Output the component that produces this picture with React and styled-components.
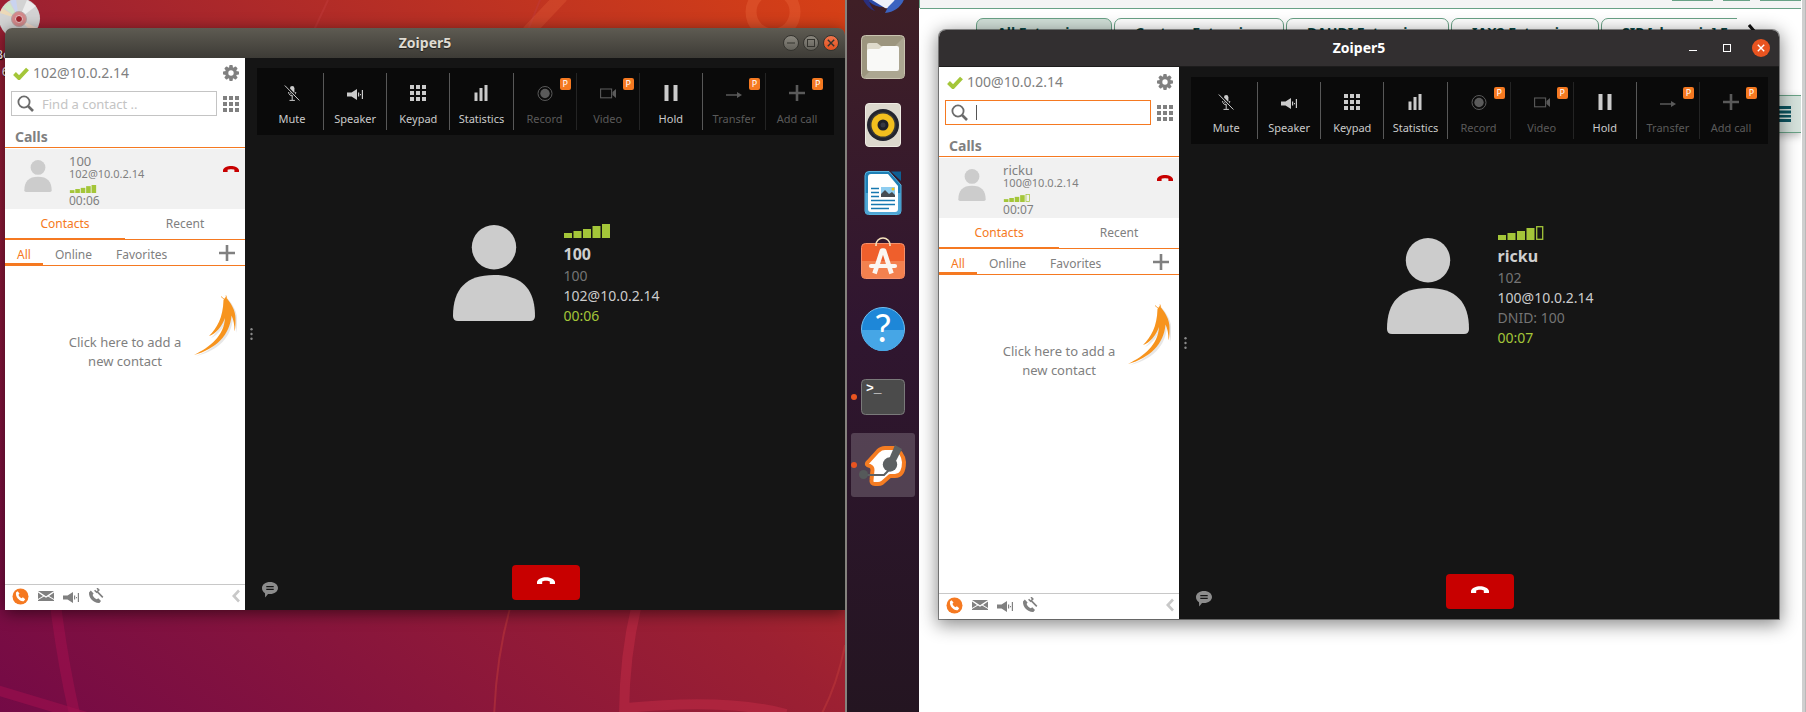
import React from "react";
import styled, { createGlobalStyle, css } from "styled-components";

const ORANGE = "#f57921";
const GREY = "#808080";
const LIME = "#a4c639";

const GlobalStyle = createGlobalStyle`
  *, *::before, *::after { box-sizing: border-box; }
  body {
    margin: 0;
    font-family: "Noto Sans", "Open Sans", sans-serif;
    color: ${GREY};
    overflow-x: hidden;
  }
  button, input { font: inherit; color: inherit; }
  button { border: 0; padding: 0; background: none; cursor: pointer; }
  h1, h2, p, ul { margin: 0; padding: 0; }
  svg { display: block; flex: none; }
`;

/* ---------- page ---------- */

const Page = styled.div`
  display: flex;
  min-height: 100vh;
  overflow: hidden;
`;

const FirstDesktop = styled.section`
  flex: 846 1 0;
  min-width: 0;
  display: grid;
  overflow: hidden;
  border-right: 2px solid #85827d;
  background: linear-gradient(to top right, #740a46, #9c2032 50%, #d64016);
`;

const SecondDesktop = styled.section`
  flex: 960 1 0;
  min-width: 0;
  display: flex;
`;

const Layer = styled.div`
  grid-area: 1 / 1;
  min-width: 0;
  min-height: 0;
`;

const WindowArea = styled(Layer)`
  position: relative;
  display: flex;
  padding: ${(p) => (p.$variant === "classic" ? "28px 0 102px 5px" : "30px 27px 93px 20px")};
`;

const DesktopIcon = styled(Layer)`
  width: 88px;
  margin-left: -24px;
  display: flex;
  flex-direction: column;
  align-items: center;
  color: #fff;
  font-size: 13px;
  line-height: 17px;
  text-align: center;
  text-shadow: 1px 1px 1px #000;
`;

const DiscLabel = styled.span`
  margin-top: 4px;
`;

const WallpaperArt = styled.svg`
  grid-area: 1 / 1;
  width: 100%;
  height: 100%;
`;

/* ---------- dock ---------- */

const Dock = styled.nav`
  flex: none;
  width: 72px;
  padding: 0 4px;
  overflow: hidden;
  background: linear-gradient(#3f1f26, #301630 45%, #241521);
`;

const DockList = styled.ul`
  list-style: none;
  display: flex;
  flex-direction: column;
  gap: 4px;
  margin-top: -43px;
`;

const DockButton = styled.button`
  display: block;
  width: 64px;
  height: 64px;
  border-radius: 3px;
  background: ${(p) => (p.$active ? "rgba(255, 255, 255, 0.19)" : "none")};
`;

/* ---------- browser page ---------- */

const BrowserScreen = styled.div`
  flex: 1;
  min-width: 0;
  display: grid;
  grid-template-columns: minmax(0, 1fr);
`;

const BrowserPage = styled(Layer)`
  display: flex;
  overflow: hidden;
  background: #fff;
`;

const BrowserContent = styled.div`
  flex: 1;
  min-width: 0;
  border-left: 1px solid #69a286;
  border-image: linear-gradient(#69a286 0 9px, #fff 9px) 1;
`;

const BrowserBar = styled.div`
  height: 9px;
  display: flex;
  justify-content: flex-end;
  align-items: flex-start;
  gap: 10px;
  background: #f4f4f4;
  border-bottom: 1px solid #69a286;
`;

const BarStub = styled.span`
  width: ${(p) => p.$width}px;
  height: 1px;
  background: #69a286;
`;

const TabRow = styled.div`
  display: flex;
  margin: 9px 11px 0 56px;
`;

const TabClip = styled.div`
  flex: 1;
  min-width: 0;
  display: flex;
  gap: 2px;
  overflow: hidden;
`;

const PageTab = styled.button`
  flex: none;
  width: ${(p) => p.$width}px;
  height: 40px;
  display: flex;
  align-items: flex-start;
  padding: 4px 16px 0 20px;
  border: 1px solid #69a286;
  border-radius: 7px 7px 0 0;
  background: ${(p) => (p.$active ? "#d2e0d9" : "#fff")};
  color: #0b4a47;
  font-size: 14px;
  font-weight: 700;
  line-height: 20px;
  text-align: left;
  white-space: nowrap;
  overflow: hidden;
`;

const TabScroll = styled.button`
  align-self: flex-start;
  width: 53px;
  padding: 6px 0 0 11px;
`;

const MenuStrip = styled.div`
  display: flex;
  justify-content: flex-end;
  margin: 37px 0 0 770px;
  padding: 10px;
  border: 1px solid #69a286;
  border-right: 0;
  background: #d5e2dc;
  box-shadow: 0 3px 8px rgba(0, 0, 0, 0.25);
`;

const Scrollbar = styled.div`
  width: 5px;
  border: solid #fff;
  border-width: 0 1px;
  border-right-color: #b9b9b9;
  background: #cfcfcf;
`;

/* ---------- phone window ---------- */

const WindowFrame = styled.article`
  flex: 1;
  min-width: 0;
  display: flex;
  flex-direction: column;
  border-radius: 7px 7px 0 0;
  ${(p) =>
    p.$variant === "classic"
      ? css`
          box-shadow: 0 3px 16px rgba(0, 0, 0, 0.55);
        `
      : css`
          box-shadow: 0 0 0 1px rgba(0, 0, 0, 0.4), 0 4px 18px 2px rgba(0, 0, 0, 0.45);
        `}
`;

const TitleBar = styled.header`
  display: grid;
  grid-template-columns: 1fr auto 1fr;
  align-items: center;
  border-radius: 7px 7px 0 0;
  ${(p) =>
    p.$variant === "classic"
      ? css`
          height: 30px;
          padding: 0 6px;
          color: #dfdbd2;
          background: linear-gradient(#5e5b52, #3d3b36);
          text-shadow: 0 1px 1px #1d1c1a;
        `
      : css`
          height: 37px;
          padding: 0 9px;
          color: #fff;
          background: #322f30;
          border-bottom: 1px solid #1d1c1c;
        `}
`;

const WindowTitle = styled.h1`
  grid-column: 2;
  font-size: 14px;
  line-height: 20px;
  font-weight: 700;
`;

const WindowButtons = styled.div`
  display: flex;
  justify-content: flex-end;
  gap: ${(p) => (p.$variant === "classic" ? 4 : 16)}px;
`;

const WindowButton = styled.button`
  display: grid;
  place-items: center;
  border-radius: 50%;
  ${(p) =>
    p.$variant === "classic"
      ? css`
          width: 16px;
          height: 16px;
          color: #35342f;
          border: 1px solid #35342f;
          background: ${p.$close ? "linear-gradient(#f0754c, #e2521f)" : "linear-gradient(#8a877e, #63615a)"};
        `
      : css`
          width: 18px;
          height: 18px;
          color: #fff;
          background: ${p.$close ? "#e95420" : "none"};
        `}
`;

const WindowBody = styled.div`
  flex: 1;
  display: flex;
  min-height: 480px;
`;

/* ---------- sidebar ---------- */

const Sidebar = styled.aside`
  flex: none;
  width: 240px;
  display: flex;
  flex-direction: column;
  background: #fff;
`;

const AccountRow = styled.div`
  display: flex;
  align-items: center;
  height: 30px;
  padding: 0 6px 0 8px;
  gap: 4px;
  font-size: 14px;
  line-height: 20px;
`;

const AccountName = styled.span`
  flex: 1;
`;

const SearchRow = styled.div`
  display: flex;
  align-items: center;
  gap: 6px;
  padding: 3px 6px 0;
`;

const SearchBox = styled.label`
  flex: 1;
  min-width: 0;
  height: 25px;
  display: flex;
  align-items: center;
  padding: 0 5px;
  border: 1px solid ${(p) => (p.$focused ? ORANGE : "#c4c4c4")};
  color: #6b6b6b;
`;

const SearchInput = styled.input`
  flex: 1;
  min-width: 0;
  margin-left: 8px;
  padding: 0;
  border: 0;
  outline: 0;
  background: none;
  font-size: 13px;
  line-height: 20px;
  &::placeholder { color: #c4c4c4; opacity: 1; }
`;

const Caret = styled.span`
  width: 1px;
  height: 15px;
  margin-left: 8px;
  background: #555;
`;

const SectionTitle = styled.h2`
  height: 32px;
  padding: 11px 10px 0;
  border-bottom: 1px solid ${ORANGE};
  font-size: 14px;
  line-height: 20px;
  font-weight: 700;
`;

const CallItem = styled.div`
  display: flex;
  align-items: flex-start;
  height: 60px;
  margin-top: 1px;
  padding: 6px 6px 0 19px;
  background: #f1f1f1;
`;

const CallText = styled.div`
  flex: 1;
  padding-left: 17px;
  font-size: 12px;
  line-height: 16px;
`;

const CallName = styled.p`
  font-size: 13px;
  line-height: 13px;
`;

const CallAccount = styled.p`
  font-size: 11px;
  line-height: 12px;
  margin-bottom: 5px;
`;

const AvatarSlot = styled.div`
  padding-top: 5px;
`;

const HangUp = styled.button`
  padding: 11px 0;
  color: #c80000;
`;

const Tabs = styled.div`
  display: flex;
  height: 31px;
  box-shadow: inset 0 -1px 0 ${ORANGE};
`;

const Tab = styled.button`
  flex: 1;
  padding-bottom: 1px;
  font-size: 12px;
  color: ${(p) => (p.$active ? ORANGE : GREY)};
  border-bottom: 2px solid ${(p) => (p.$active ? ORANGE : "transparent")};
`;

const Filters = styled.div`
  display: flex;
  height: 26px;
  padding-right: 10px;
  box-shadow: inset 0 -1px 0 ${ORANGE};
`;

const Filter = styled.button`
  padding: 6px 12px 0;
  font-size: 12px;
  line-height: 16px;
  color: ${(p) => (p.$active ? ORANGE : GREY)};
  border-bottom: 3px solid ${(p) => (p.$active ? ORANGE : "transparent")};
`;

const AddButton = styled.button`
  margin-left: auto;
`;

const EmptyContacts = styled.div`
  position: relative;
  flex: 1;
  padding: 67px 40px 0;
  text-align: center;
  font-size: 13px;
  line-height: 19px;
`;

const ArrowHint = styled.div`
  position: absolute;
  top: 29px;
  right: 7px;
`;

const SidebarFooter = styled.footer`
  display: flex;
  align-items: center;
  height: 26px;
  padding: 0 5px 3px 7px;
  gap: 9px;
  border-top: 1px solid #c8c8c8;
`;

const CollapseButton = styled.button`
  margin-left: auto;
`;

/* ---------- call panel ---------- */

const CallPanel = styled.main`
  flex: 1;
  min-width: 0;
  display: flex;
  padding-right: 11px;
  background: #151515;
`;

const Grip = styled.div`
  width: 12px;
  display: grid;
  place-items: center;
  color: #8a8a8a;
`;

const CallContent = styled.div`
  flex: 1;
  min-width: 0;
  display: flex;
  flex-direction: column;
`;

const Toolbar = styled.div`
  display: flex;
  margin-top: 10px;
  padding: 5px 6px 5px 4px;
  background: #0a0a0a;
`;

const ToolButton = styled.button`
  position: relative;
  flex: 1 1 0;
  min-width: 0;
  height: 57px;
  display: flex;
  flex-direction: column;
  align-items: center;
  padding-top: 12px;
  gap: 10px;
  font-size: 11px;
  line-height: 16px;
  white-space: nowrap;
  color: ${(p) => (p.$locked ? "#5a5a5a" : "#cbcbcb")};
  & + & { border-left: 1px solid #585858; }
  ${(p) =>
    p.$dimEdge &&
    css`
      &&& { border-left-color: #242424; }
    `}
`;

const Badge = styled.span`
  position: absolute;
  top: 5px;
  right: 5px;
  width: 11px;
  height: 12px;
  border-radius: 2px;
  background: ${ORANGE};
  color: #fff;
  font-size: 9px;
  line-height: 12px;
  text-align: center;
`;

const CallInfo = styled.div`
  display: grid;
  grid-template-columns: minmax(0, 1fr) minmax(0, 1fr);
  align-items: center;
  min-height: 118px;
  margin-top: 79px;
`;

const AvatarColumn = styled.div`
  display: flex;
  justify-content: flex-end;
  padding-right: 11px;
`;

const InfoColumn = styled.div`
  padding: 3px 0 0 18px;
  font-size: 14px;
  line-height: 20px;
`;

const InfoLine = styled.p`
  color: ${(p) => (p.$tone === "time" ? LIME : p.$tone === "muted" ? "#747474" : "#cccccc")};
`;

const PeerName = styled.h2`
  margin-top: 5px;
  margin-bottom: 1px;
  color: #cfcfcf;
  font-size: 16px;
  line-height: 22px;
`;

const CallFooter = styled.div`
  margin-top: auto;
  display: grid;
  grid-template-columns: 1fr auto 1fr;
  align-items: end;
  padding: 0 5px 10px;
`;

const ChatButton = styled.button`
  justify-self: start;
  padding-bottom: 2px;
`;

const EndButton = styled.button`
  width: 68px;
  height: 35px;
  display: grid;
  place-items: center;
  padding-bottom: 4px;
  border-radius: 4px;
  background: #c80000;
  color: #fff;
`;

/* ---------- drawings ---------- */

const PersonIcon = ({ width, height }) => (
  <svg width={width} height={height} viewBox="0 0 82 96" fill="#cccccc" aria-hidden="true">
    <circle cx="41" cy="22.2" r="22.2" />
    <path d="M0 91C0 64 13 50 41 50s41 14 41 41q0 5-5 5H5q-5 0-5-5z" />
  </svg>
);

const SignalIcon = ({ level, width, height }) => (
  <svg width={width} height={height} viewBox="0 0 46 14" role="img" aria-label={`Signal ${level} of 5`}>
    {[5, 7, 9, 12, 14].map((h, i) =>
      i < level ? (
        <rect key={h} x={i * 9.5} y={14 - h} width="8" height={h} fill={LIME} />
      ) : (
        <rect key={h} x={i * 9.5 + 0.7} y={14 - h + 0.7} width="6" height={h - 1.4} fill="none" stroke={LIME} strokeWidth="1.3" />
      )
    )}
  </svg>
);

const HangUpIcon = ({ width, height }) => (
  <svg width={width} height={height} viewBox="0 0 16 6" fill="currentColor" aria-hidden="true">
    <path d="M0 6V4C1 1.4 4.4 0 8 0s7 1.4 8 4v2h-4.6V3.8C10 3 6 3 4.6 3.8V6z" />
  </svg>
);

const CheckIcon = () => (
  <svg width="16" height="14" viewBox="0 0 16 14" aria-hidden="true">
    <path d="M1.5 7.5 6 12 14.5 3" fill="none" stroke={LIME} strokeWidth="4" />
  </svg>
);

const GearIcon = () => (
  <svg width="16" height="16" viewBox="0 0 16 16" aria-hidden="true">
    <g fill={GREY}>
      {[0, 45, 90, 135].map((a) => (
        <rect key={a} x="6.2" y="0" width="3.6" height="16" rx="1" transform={`rotate(${a} 8 8)`} />
      ))}
      <circle cx="8" cy="8" r="6" />
    </g>
    <circle cx="8" cy="8" r="2.7" fill="#fff" />
  </svg>
);

const KeypadIcon = () => (
  <svg width="16" height="16" viewBox="0 0 16 16" fill="currentColor" aria-hidden="true">
    {[0, 6, 12].map((y) => [0, 6, 12].map((x) => <rect key={x + "-" + y} x={x} y={y} width="4" height="4" />))}
  </svg>
);

const SearchIcon = () => (
  <svg width="17" height="17" viewBox="0 0 17 17" fill="none" stroke="currentColor" aria-hidden="true">
    <circle cx="7" cy="7" r="5.6" strokeWidth="1.8" />
    <path d="M11 11l5 5" strokeWidth="2.6" />
  </svg>
);

const PlusIcon = () => (
  <svg width="16" height="16" viewBox="0 0 16 16" fill="none" stroke="currentColor" strokeWidth="2.6" aria-hidden="true">
    <path d="M8 0v16M0 8h16" />
  </svg>
);

const SpeakerIcon = () => (
  <svg width="16" height="16" viewBox="0 0 16 16" fill="currentColor" aria-hidden="true">
    <path d="M0 7.500h4.500L10 4v11l-5.500-3.500H0zM11 7.500h1.200v4H11zM13 9h1v1.200h-1zM14.800 5H16v9h-1.200z" />
  </svg>
);

const MuteIcon = () => (
  <svg width="16" height="16" viewBox="0 0 16 16" fill="none" stroke="currentColor" aria-hidden="true">
    <rect x="6" y="1" width="4.4" height="8.5" rx="2.2" fill="currentColor" stroke="none" />
    <path d="M4.6 7c0 5 7.2 5 7.2 0M8.2 11v4M5.5 15.4h5.4" strokeWidth="1" />
    <path d="M1.500.5l14 15" stroke="#0a0a0a" strokeWidth="2.6" />
    <path d="M.8.500l14.600 15" strokeWidth="1" />
  </svg>
);

const StatsIcon = () => (
  <svg width="16" height="16" viewBox="0 0 16 16" fill="currentColor" aria-hidden="true">
    <path d="M1.500 7.500h3V16h-3zM6.500 3h3v13h-3zM11.500 0h3v16h-3z" />
  </svg>
);

const RecordIcon = () => (
  <svg width="16" height="16" viewBox="0 0 16 16" aria-hidden="true">
    <circle cx="8" cy="8.500" r="7" fill="none" stroke="currentColor" strokeWidth="1" />
    <circle cx="8" cy="8.500" r="4.700" fill="currentColor" />
  </svg>
);

const VideoIcon = () => (
  <svg width="16" height="16" viewBox="0 0 16 16" aria-hidden="true">
    <rect x=".6" y="4" width="11" height="8.800" fill="none" stroke="currentColor" strokeWidth="1.100" />
    <path d="M12.500 7 16 4v9l-3.500-3z" fill="currentColor" />
  </svg>
);

const PauseIcon = () => (
  <svg width="16" height="16" viewBox="0 0 16 16" fill="currentColor" aria-hidden="true">
    <path d="M1.500 0h4v16h-4zM10.500 0h4v16h-4z" />
  </svg>
);

const TransferIcon = () => (
  <svg width="16" height="16" viewBox="0 0 16 16" aria-hidden="true">
    <path d="M0 9.200h11V7l5 3-5 3v-2.200H0z" fill="currentColor" />
  </svg>
);

const PhoneCircleIcon = () => (
  <svg width="17" height="17" viewBox="0 0 17 17" aria-hidden="true">
    <circle cx="8.500" cy="8.500" r="8" fill={ORANGE} />
    <path d="M4 4.600 5.600 3.300l1.900 2.300-1 1.200c.3 1.500 1.400 2.800 3 3.400l1.400-.9 2.300 2-1.500 1.900C8 14 3.200 9.400 4 4.600z" fill="#fff" />
  </svg>
);

const MailIcon = () => (
  <svg width="16" height="10" viewBox="0 0 16 10" fill={GREY} aria-hidden="true">
    <path d="M0 0h16L8 5.200zM0 1.600 5 5 0 8zM16 1.600 11 5l5 3zM0 10V9l6-3.400 2 1.200 2-1.200L16 9v1z" />
  </svg>
);

const RepairIcon = () => (
  <svg width="16" height="16" viewBox="0 0 16 16" aria-hidden="true">
    <path d="M1 4.500 2.800 2.600l2.800 3-1 1.500c.6 1.900 2.100 3.500 4.200 4.200l1.500-1L13 13l-1.600 2C5.800 15.400.6 10 1 4.500z" fill={GREY} />
    <path d="M6.600 2.200 8.600 4.200 10.800 2 9 .2M9.200 3.600 14.800 9.400" fill="none" stroke={GREY} strokeWidth="1.600" />
  </svg>
);

const ChevronIcon = () => (
  <svg width="8" height="14" viewBox="0 0 8 14" fill="none" stroke="#c8c8c8" strokeWidth="2.600" aria-hidden="true">
    <path d="M7 1.500 1.800 7 7 12.500" />
  </svg>
);

const ArrowIcon = () => (
  <svg width="44" height="66" viewBox="0 0 44 66" aria-hidden="true">
    <path
      d="M34 4C39 10 44 18 43 26c0 5 0 9-1 12 0-7-1-12-3-16-1 20-15 34-37 39 16-6 29-16 31-37-3 8-9 16-16 19 8-7 13-18 14-39z"
      fill="#888"
      opacity=".2"
    />
    <path
      d="M31.500 2c5 5 10.500 14 10 22 0 5 0 9-1 12.500 0-7-1-12-3-16C36 40 22 54 0 60c16-8 30-19 31-37-3 8-9 16-16 18 8-8 14-18 14.500-36z"
      fill="#f7941e"
    />
    <path d="M27 1.500l3.500 3M32 .5l.8 3" stroke="#f7941e" strokeWidth=".8" />
  </svg>
);

const ChatIcon = () => (
  <svg width="16" height="16" viewBox="0 0 16 16" aria-hidden="true">
    <path d="M8 0c4.500 0 8 2.600 8 6s-3.500 6-8 6c-.7 0-1.300 0-2 .1L3.200 15.600 3 11.200C1.200 10.200 0 8.300 0 6c0-3.400 3.500-6 8-6z" fill="#8c8c8c" />
    <path d="M4.300 4.700h7.400M4.300 7.300h7.400" stroke="#151515" strokeWidth="1.200" />
  </svg>
);

const DotsIcon = () => (
  <svg width="3" height="12" viewBox="0 0 3 12" fill="currentColor" aria-hidden="true">
    <circle cx="1.500" cy="1.300" r="1.200" />
    <circle cx="1.500" cy="6" r="1.200" />
    <circle cx="1.500" cy="10.700" r="1.200" />
  </svg>
);

const MinGlyph = ({ flat }) => (
  <svg width="10" height="10" viewBox="0 0 10 10" stroke="currentColor" aria-hidden="true">
    <path d={flat ? "M1 7.500h8" : "M1 5h8"} strokeWidth="1" />
  </svg>
);

const MaxGlyph = () => (
  <svg width="10" height="10" viewBox="0 0 10 10" fill="none" stroke="currentColor" aria-hidden="true">
    <rect x="1.500" y="1.500" width="7" height="7" />
  </svg>
);

const CloseGlyph = () => (
  <svg width="10" height="10" viewBox="0 0 10 10" stroke="currentColor" strokeWidth="1.400" aria-hidden="true">
    <path d="M1.800 1.800l6.400 6.400M8.200 1.800 1.800 8.200" />
  </svg>
);

const DiscIcon = () => (
  <svg width="42" height="42" viewBox="0 0 42 42" aria-hidden="true">
    <circle cx="20.500" cy="18.500" r="20.500" fill="#d3d3d3" />
    <path d="M20 19 4 7l6-5z" fill="#cfe6c8" />
    <path d="M20 19 1 13l2-5z" fill="#ecd9b8" />
    <path d="M20 19 11 1l6-2z" fill="#c9d3f0" />
    <path d="M20 19l18 9-4 5z" fill="#f1d8c8" />
    <path d="M20 19 28 0l9 6z" fill="#ececec" />
    <circle cx="20" cy="19" r="7.500" fill="#d48a8c" stroke="#b9a3a3" />
    <circle cx="20" cy="19" r="3.500" fill="#a3262e" stroke="#e7caca" />
  </svg>
);

const Wallpaper = () => (
  <WallpaperArt viewBox="0 0 845 712" preserveAspectRatio="none" fill="none" aria-hidden="true">
    <path d="M40 320C40 480 52 620 76 720" stroke="#a3104f" strokeWidth="11" opacity=".55" />
    <path d="M-10 688 90 718" stroke="#a3104f" strokeWidth="10" opacity=".55" />
    <path d="M636 608q-12 50-12 110M626 708q100-10 160 6" stroke="#c42c46" strokeWidth="10" opacity=".5" />
    <path d="M510 608q-14 50-16 110M845 645q-8 40-24 70M328 0l-14 30M540 0l-12 30" stroke="#c03a3a" strokeWidth="2" opacity=".5" />
    <path d="M562-4l-34 36" stroke="#e8643a" strokeWidth="13" opacity=".3" />
    <circle cx="773" cy="12" r="22" stroke="#e8643a" strokeWidth="11" opacity=".4" />
  </WallpaperArt>
);

const ThunderbirdIcon = () => (
  <svg width="64" height="64" viewBox="0 0 64 64" aria-hidden="true">
    <circle cx="32" cy="30" r="20" fill="#2b4aa8" />
    <path d="M10 38c3 8 8 14 14 16-4-4-6-8-6-12z" fill="#2a2f7d" />
    <path d="M16 40l18 11q4 1 6-2l8-12z" fill="#eef0f8" />
    <path d="M34 56c10-1 18-7 20-17l-4 3 1-6-14 14z" fill="#3b63c0" />
  </svg>
);

const FilesIcon = () => (
  <svg width="64" height="64" viewBox="0 0 64 64" aria-hidden="true">
    <rect x="10.500" y="10.500" width="43" height="43" rx="4" fill="#9c957e" stroke="#c9c3b0" />
    <path d="M53 12v38q0 3-3 3H12z" fill="#aca691" />
    <path d="M16 20q0-2 2-2h8l4 3h14v8H16z" fill="#dedacb" />
    <path d="M16 26q0-2 2-2h10l4-3h14q2 0 2 2v21q0 2-2 2H18q-2 0-2-2z" fill="#f9f9f7" />
  </svg>
);

const MusicIcon = () => (
  <svg width="64" height="64" viewBox="0 0 64 64" aria-hidden="true">
    <rect x="14.500" y="10.500" width="35" height="43" rx="3.500" fill="#dcd8cd" stroke="#efece4" />
    <circle cx="32" cy="32" r="16" fill="#22242e" />
    <circle cx="32" cy="32" r="13" fill="#3b3a35" />
    <circle cx="32" cy="32" r="11.500" fill="#f2bf1e" />
    <circle cx="32" cy="32" r="5.500" fill="#1f2028" />
    <circle cx="32" cy="32" r="2.500" fill="#363844" />
  </svg>
);

const WriterIcon = () => (
  <svg width="64" height="64" viewBox="0 0 64 64" aria-hidden="true">
    <path d="M18 10.500h20L50 24v26q0 3.500-3.500 3.500h-29Q14 53.500 14 50V14.500q0-4 4-4z" fill="#1f7fb5" stroke="#58b4e0" />
    <path d="M40 10.500h10V20z" fill="#0f5f93" />
    <path d="M14.500 32h35v18q0 3-3 3h-29q-3 0-3-3z" fill="#4fa6d4" />
    <path d="M20 13h17l10 12v23q0 3-3 3H20q-3 0-3-3V16q0-3 3-3z" fill="#fff" />
    <path d="M20 27.500h8M20 31.500h8M20 35.500h8M20 39.500h24M20 43.500h24M20 47.500h18" stroke="#1778b0" strokeWidth="1.600" />
    <rect x="30" y="26" width="14" height="10" fill="#8ecdf0" />
    <path d="M30 36v-3l4-4 4 4 3-2 3 3v2z" fill="#454c52" />
    <circle cx="42" cy="28" r="1.500" fill="#f0c419" />
  </svg>
);

const SoftwareIcon = () => (
  <svg width="64" height="64" viewBox="0 0 64 64" aria-hidden="true">
    <rect x="10.500" y="14.500" width="43" height="35" rx="4" fill="#ef5f2c" stroke="#f5906a" />
    <path d="M11 32h42v14q0 3-3 3H14q-3 0-3-3z" fill="#f3814f" />
    <path d="M25 17v-1a7 7 0 0 1 14 0v1" fill="none" stroke="#f6e3bd" strokeWidth="1.600" />
    <g fill="none" stroke="#fbf6f1">
      <path d="M23.500 44.500 31 21.500h2l7.500 23" strokeWidth="4.600" strokeLinejoin="round" />
      <path d="M20 37h24" strokeWidth="4.200" strokeLinecap="round" />
    </g>
  </svg>
);

const HelpText = styled.text`
  font: 400 38px Lato, sans-serif;
  fill: #fff;
  text-anchor: middle;
`;

const PromptText = styled.text`
  font: 700 13px "Liberation Mono", monospace;
  fill: #fff;
`;

const HelpIcon = () => (
  <svg width="64" height="64" viewBox="0 0 64 64" aria-hidden="true">
    <circle cx="32" cy="32" r="21.500" fill="#1e87d8" stroke="#6fc0f2" />
    <path d="M11 33a21 21 0 0 0 42 0z" fill="#46a6e6" />
    <HelpText x="32" y="45">?</HelpText>
  </svg>
);

const TerminalIcon = () => (
  <svg width="64" height="64" viewBox="0 0 64 64" aria-hidden="true">
    <circle cx="3" cy="32" r="3" fill="#e95420" />
    <rect x="10.500" y="14.500" width="43" height="35" rx="4" fill="#4b4b4b" stroke="#7a7a7a" />
    <PromptText x="15" y="27">&gt;_</PromptText>
  </svg>
);

const ZoiperIcon = () => (
  <svg width="64" height="64" viewBox="0 0 64 64" aria-hidden="true">
    <circle cx="3" cy="32" r="3" fill="#e95420" />
    <path
      d="M17 29 27 18q3-3 7-3h9q9 4 10 14 0 14-9 14h-5L31 50q-1.500 1-4 1h-3q-4 0-3.500-4l1-10q0-3-2.500-4-5-1-2-4z"
      fill="#fff"
      stroke="#f57c22"
      strokeWidth="4"
      strokeLinejoin="round"
    />
    <path d="M44 12l7 4-6 12-7-2z" fill="#5c6062" />
    <circle cx="39" cy="31.500" r="7.200" fill="#5c6062" />
    <path d="M14 42h19l5-5" fill="none" stroke="#5c6062" strokeWidth="2" />
    <circle cx="12.500" cy="41.500" r="4.500" fill="#55595a" />
  </svg>
);

const MenuLines = () => (
  <svg width="24" height="16" viewBox="0 0 24 16" fill="#0c5560" aria-hidden="true">
    <path d="M0 0h24v3H0zM0 4.500h24v3H0zM0 9h24v2.500H0zM0 13h24v3H0z" />
  </svg>
);

const NextIcon = () => (
  <svg width="10" height="16" viewBox="0 0 10 16" fill="none" stroke="#111" strokeWidth="3" aria-hidden="true">
    <path d="M1 1l6 7-6 7" />
  </svg>
);

/* ---------- parts ---------- */

const TOOLS = [
  { label: "Mute", Icon: MuteIcon },
  { label: "Speaker", Icon: SpeakerIcon },
  { label: "Keypad", Icon: KeypadIcon },
  { label: "Statistics", Icon: StatsIcon },
  { label: "Record", Icon: RecordIcon, locked: true },
  { label: "Video", Icon: VideoIcon, locked: true, dimEdge: true },
  { label: "Hold", Icon: PauseIcon, dimEdge: true },
  { label: "Transfer", Icon: TransferIcon, locked: true },
  { label: "Add call", Icon: PlusIcon, locked: true, dimEdge: true },
];

function PhoneWindow({ variant, account, peer, number, dnid, time, level, focused }) {
  const flat = variant === "modern";
  return (
    <WindowFrame $variant={variant}>
      <TitleBar $variant={variant}>
        <WindowTitle>Zoiper5</WindowTitle>
        <WindowButtons $variant={variant}>
          <WindowButton $variant={variant} aria-label="Minimize"><MinGlyph flat={flat} /></WindowButton>
          <WindowButton $variant={variant} aria-label="Maximize"><MaxGlyph /></WindowButton>
          <WindowButton $variant={variant} $close aria-label="Close"><CloseGlyph /></WindowButton>
        </WindowButtons>
      </TitleBar>
      <WindowBody>
        <Sidebar>
          <AccountRow>
            <CheckIcon />
            <AccountName>{account}</AccountName>
            <button aria-label="Settings"><GearIcon /></button>
          </AccountRow>
          <SearchRow>
            <SearchBox $focused={focused}>
              <SearchIcon />
              {focused && <Caret />}
              <SearchInput type="text" aria-label="Find a contact" placeholder={focused ? "" : "Find a contact .."} />
            </SearchBox>
            <button aria-label="Dial pad"><KeypadIcon /></button>
          </SearchRow>
          <SectionTitle>Calls</SectionTitle>
          <CallItem>
            <AvatarSlot><PersonIcon width={28} height={32} /></AvatarSlot>
            <CallText>
              <CallName>{peer}</CallName>
              <CallAccount>{account}</CallAccount>
              <SignalIcon level={level} width={28} height={8} />
              <p>{time}</p>
            </CallText>
            <HangUp aria-label="Hang up"><HangUpIcon width={16} height={6} /></HangUp>
          </CallItem>
          <Tabs>
            <Tab $active>Contacts</Tab>
            <Tab>Recent</Tab>
          </Tabs>
          <Filters>
            <Filter $active>All</Filter>
            <Filter>Online</Filter>
            <Filter>Favorites</Filter>
            <AddButton aria-label="Add contact"><PlusIcon /></AddButton>
          </Filters>
          <EmptyContacts>
            <p>Click here to add a<br />new contact</p>
            <ArrowHint><ArrowIcon /></ArrowHint>
          </EmptyContacts>
          <SidebarFooter>
            <button aria-label="Account status"><PhoneCircleIcon /></button>
            <button aria-label="Voicemail"><MailIcon /></button>
            <button aria-label="Volume"><SpeakerIcon /></button>
            <button aria-label="Audio wizard"><RepairIcon /></button>
            <CollapseButton aria-label="Collapse"><ChevronIcon /></CollapseButton>
          </SidebarFooter>
        </Sidebar>
        <CallPanel>
          <Grip><DotsIcon /></Grip>
          <CallContent>
            <Toolbar>
              {TOOLS.map(({ label, Icon, locked, dimEdge }) => (
                <ToolButton key={label} $locked={locked} $dimEdge={dimEdge}>
                  <Icon />
                  {label}
                  {locked && <Badge>P</Badge>}
                </ToolButton>
              ))}
            </Toolbar>
            <CallInfo>
              <AvatarColumn><PersonIcon width={82} height={96} /></AvatarColumn>
              <InfoColumn>
                <SignalIcon level={level} width={46} height={14} />
                <PeerName>{peer}</PeerName>
                <InfoLine $tone="muted">{number}</InfoLine>
                <InfoLine>{account}</InfoLine>
                {dnid && <InfoLine $tone="muted">DNID: {dnid}</InfoLine>}
                <InfoLine $tone="time">{time}</InfoLine>
              </InfoColumn>
            </CallInfo>
            <CallFooter>
              <ChatButton aria-label="Chat"><ChatIcon /></ChatButton>
              <EndButton aria-label="End call"><HangUpIcon width={18} height={7} /></EndButton>
            </CallFooter>
          </CallContent>
        </CallPanel>
      </WindowBody>
    </WindowFrame>
  );
}

const DOCK_ITEMS = [
  ["Thunderbird", ThunderbirdIcon],
  ["Files", FilesIcon],
  ["Rhythmbox", MusicIcon],
  ["Writer", WriterIcon],
  ["Software", SoftwareIcon],
  ["Help", HelpIcon],
  ["Terminal", TerminalIcon],
  ["Zoiper", ZoiperIcon],
];

const PAGE_TABS = [
  ["All Extensions", 136],
  ["Custom Extensions", 170],
  ["DAHDI Extensions", 163],
  ["IAX2 Extensions", 148],
  ["SIP [chan_sip] Extensions", 220],
];

export default function App() {
  return (
    <Page>
      <GlobalStyle />
      <FirstDesktop>
        <Wallpaper />
        <DesktopIcon>
          <DiscIcon />
          <DiscLabel>VBox_GAs_<br />6.1.10</DiscLabel>
        </DesktopIcon>
        <WindowArea $variant="classic">
          <PhoneWindow variant="classic" account="102@10.0.2.14" peer="100" number="100" time="00:06" level={5} />
        </WindowArea>
      </FirstDesktop>
      <SecondDesktop>
        <Dock>
          <DockList>
            {DOCK_ITEMS.map(([name, Icon]) => (
              <li key={name}>
                <DockButton aria-label={name} $active={name === "Zoiper"}><Icon /></DockButton>
              </li>
            ))}
          </DockList>
        </Dock>
        <BrowserScreen>
          <BrowserPage>
            <BrowserContent>
              <BrowserBar>
                <BarStub $width={41} />
                <BarStub $width={27} />
                <BarStub $width={41} />
              </BrowserBar>
              <TabRow>
                <TabClip>
                  {PAGE_TABS.map(([name, width], i) => (
                    <PageTab key={name} $width={width} $active={i === 0}>{name}</PageTab>
                  ))}
                </TabClip>
                <TabScroll aria-label="More tabs"><NextIcon /></TabScroll>
              </TabRow>
              <MenuStrip><MenuLines /></MenuStrip>
            </BrowserContent>
            <Scrollbar />
          </BrowserPage>
          <WindowArea $variant="modern">
            <PhoneWindow variant="modern" account="100@10.0.2.14" peer="ricku" number="102" dnid="100" time="00:07" level={4} focused />
          </WindowArea>
        </BrowserScreen>
      </SecondDesktop>
    </Page>
  );
}
